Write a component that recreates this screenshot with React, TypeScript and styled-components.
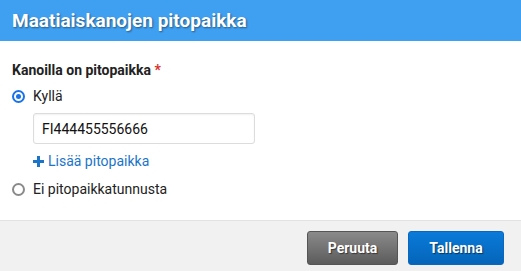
import React from "react";
import styled, { createGlobalStyle } from "styled-components";

const Global = createGlobalStyle`
  html, body { margin: 0; padding: 0; background: #fff; }
  body { font-family: Roboto, "Liberation Sans", Arial, sans-serif; }
  * { box-sizing: border-box; }
`;

const Dialog = styled.div`
  width: 521px;
  height: 271px;
  display: flex;
  flex-direction: column;
  background: #fff;
`;

const Header = styled.div`
  height: 41px;
  background: #3fa0f2;
  display: flex;
  align-items: center;
  padding: 0 12px;
`;

const Title = styled.h1`
  margin: 0;
  font-size: 19px;
  font-weight: 700;
  color: #fff;
  text-shadow: 1px 1px 2px rgba(0, 0, 0, 0.45);
`;

const Body = styled.div`
  flex: 1;
  padding: 21px 12px 0;
  display: flex;
  flex-direction: column;
`;

const Label = styled.div`
  font-size: 14px;
  font-weight: 700;
  color: #222;
  margin-bottom: 8px;
`;

const Req = styled.span`
  color: #d9302a;
`;

const RadioRow = styled.label`
  display: flex;
  align-items: center;
  gap: 8px;
  font-size: 14px;
  color: #222;
  height: 20px;
`;

const RadioDot = styled.span<{ $checked?: boolean }>`
  width: 13px;
  height: 13px;
  border-radius: 50%;
  border: 2px solid ${(p) => (p.$checked ? "#1a73e8" : "#8a8a8a")};
  display: flex;
  align-items: center;
  justify-content: center;
  &::after {
    content: "";
    display: ${(p) => (p.$checked ? "block" : "none")};
    width: 5px;
    height: 5px;
    border-radius: 50%;
    background: #1a73e8;
  }
`;

const Indented = styled.div`
  padding-left: 21px;
  display: flex;
  flex-direction: column;
`;

const Input = styled.div`
  margin-top: 7px;
  width: 222px;
  height: 31px;
  border: 1px solid #dcdcdc;
  border-radius: 3px;
  box-shadow: inset 0 1px 2px rgba(0, 0, 0, 0.06);
  display: flex;
  align-items: center;
  padding: 0 8px;
  font-size: 14px;
  color: #111;
`;

const AddLink = styled.div`
  display: flex;
  align-items: center;
  gap: 4px;
  margin-top: 9px;
  color: #1b74c8;
  font-size: 14px;
  height: 16px;
`;

const SecondRow = styled.div`
  margin-top: 10px;
`;

const Footer = styled.div`
  height: 51px;
  border-top: 1px solid #e2e2e2;
  background: #f1f1f1;
  display: flex;
  justify-content: flex-end;
  align-items: flex-start;
  padding: 10px 17px 0 0;
  gap: 10px;
`;

const Button = styled.button<{ $primary?: boolean }>`
  height: 34px;
  width: ${(p) => (p.$primary ? "96px" : "91px")};
  border-radius: 3px;
  border: 1px solid ${(p) => (p.$primary ? "#0867c0" : "#555")};
  background: ${(p) =>
    p.$primary
      ? "linear-gradient(#0a7ad9, #0565b9)"
      : "linear-gradient(#8a8a8a, #5c5c5c)"};
  color: #fff;
  font-family: Roboto, "Liberation Sans", Arial, sans-serif;
  font-size: 14px;
  font-weight: 700;
  text-shadow: 1px 1px 1px rgba(0, 0, 0, 0.5);
  padding: 0;
`;

export default function App() {
  return (
    <>
      <Global />
      <Dialog>
        <Header>
          <Title>Maatiaiskanojen pitopaikka</Title>
        </Header>
        <Body>
          <Label>
            Kanoilla on pitopaikka <Req>*</Req>
          </Label>
          <RadioRow>
            <RadioDot $checked />
            Kyllä
          </RadioRow>
          <Indented>
            <Input>FI444455556666</Input>
            <AddLink>
              <svg width="11" height="11" viewBox="0 0 11 11">
                <path d="M4 0h3v4h4v3H7v4H4V7H0V4h4z" fill="#1b74c8" />
              </svg>
              Lisää pitopaikka
            </AddLink>
          </Indented>
          <SecondRow>
            <RadioRow>
              <RadioDot />
              Ei pitopaikkatunnusta
            </RadioRow>
          </SecondRow>
        </Body>
        <Footer>
          <Button>Peruuta</Button>
          <Button $primary>Tallenna</Button>
        </Footer>
      </Dialog>
    </>
  );
}
